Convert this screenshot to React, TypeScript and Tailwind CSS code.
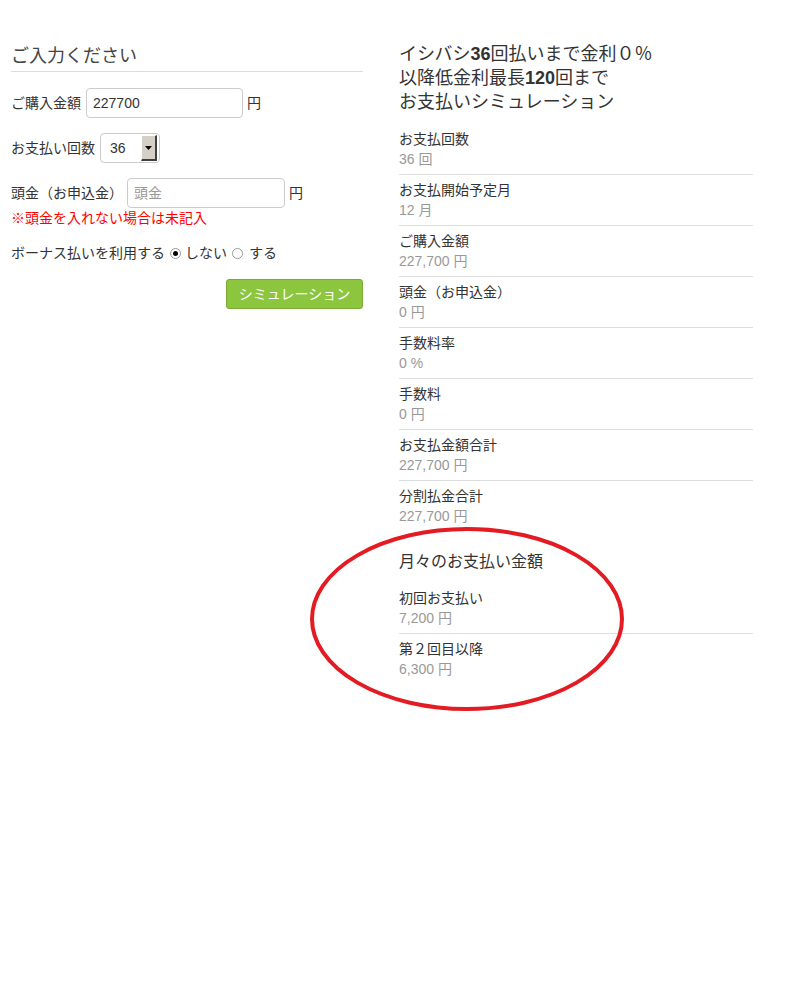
import React from "react";

const rows: [string, string][] = [
  ["お支払回数", "36 回"],
  ["お支払開始予定月", "12 月"],
  ["ご購入金額", "227,700 円"],
  ["頭金（お申込金）", "0 円"],
  ["手数料率", "0 %"],
  ["手数料", "0 円"],
  ["お支払金額合計", "227,700 円"],
  ["分割払金合計", "227,700 円"],
];

const monthly: [string, string][] = [
  ["初回お支払い", "7,200 円"],
  ["第２回目以降", "6,300 円"],
];

function Row({ label, value, last }: { label: string; value: string; last?: boolean }) {
  return (
    <div className={`pt-[5px] pb-[5px] ${last ? "" : "border-b border-[#dddddd]"}`}>
      <div className="text-[14px] leading-[20px] text-[#333333]">{label}</div>
      <div className="text-[14px] leading-[20px] text-[#999999]">{value}</div>
    </div>
  );
}

function Radio({ checked }: { checked?: boolean }) {
  return (
    <span className="inline-flex h-[11px] w-[11px] items-center justify-center rounded-full border border-[#9a9a9a] bg-white">
      {checked && <span className="h-[5px] w-[5px] rounded-full bg-black" />}
    </span>
  );
}

export default function App() {
  return (
    <div
      className="relative min-h-[1008px] w-[800px] bg-white text-[#333333]"
      style={{ fontFamily: '"Liberation Sans", "Noto Sans CJK JP", sans-serif' }}
    >
      <div className="flex gap-[36px] pl-[11px]">
        {/* Left column */}
        <div className="w-[352px] pt-[46px]">
          <h2 className="border-b border-[#dddddd] pb-[5px] text-[18px] font-normal leading-[20px] text-[#444444]">
            ご入力ください
          </h2>
          <div className="mt-[16px] flex items-center text-[14px]">
            <span>ご購入金額</span>
            <div className="ml-[5px] flex h-[30px] w-[157px] items-center rounded-[4px] border border-[#cccccc] px-[6px] text-[14px] text-[#333333]">
              227700
            </div>
            <span className="ml-[4px]">円</span>
          </div>
          <div className="mt-[15px] flex items-center text-[14px]">
            <span>お支払い回数</span>
            <div className="ml-[5px] flex h-[30px] w-[60px] items-center rounded-[4px] border border-[#cccccc] pl-[9px] pr-[2px]">
              <span className="flex-1">36</span>
              <span className="flex h-[26px] w-[16px] items-center justify-center border-r-2 border-b-2 border-t border-l border-r-[#404040] border-b-[#404040] border-t-[#ffffff] border-l-[#ffffff] bg-[#d4d0c8]">
                <svg width="7" height="4" viewBox="0 0 7 4">
                  <path d="M0 0h7L3.5 4z" fill="#000" />
                </svg>
              </span>
            </div>
          </div>
          <div className="mt-[15px] flex items-center text-[14px]">
            <span>頭金（お申込金）</span>
            <div className="ml-[4px] flex h-[30px] w-[158px] items-center rounded-[4px] border border-[#cccccc] px-[6px] text-[#999999]">
              頭金
            </div>
            <span className="ml-[4px]">円</span>
          </div>
          <div className="text-[14px] leading-[20px] text-[#ff0000]">※頭金を入れない場合は未記入</div>
          <div className="mt-[15px] flex items-center text-[14px] leading-[20px]">
            <span>ボーナス払いを利用する</span>
            <span className="ml-[5px] flex items-center">
              <Radio checked />
            </span>
            <span className="ml-[4px]">しない</span>
            <span className="ml-[5px] flex items-center">
              <Radio />
            </span>
            <span className="ml-[6px]">する</span>
          </div>
          <div className="mt-[16px] flex justify-end">
            <button className="h-[30px] w-[137px] rounded-[3px] border border-[#7bab35] bg-[#8cc63f] text-[14px] text-white">
              シミュレーション
            </button>
          </div>
        </div>

        {/* Right column */}
        <div className="w-[354px] pt-[42px]">
          <h2 className="text-[18px] font-normal leading-[24px] text-[#333333]">
            イシバシ<span className="font-bold">36</span>回払いまで金利０％
            <br />
            以降低金利最長<span className="font-bold">120</span>回まで
            <br />
            お支払いシミュレーション
          </h2>
          <div className="mt-[10px]">
            {rows.map(([l, v], i) => (
              <Row key={l} label={l} value={v} last={i === rows.length - 1} />
            ))}
          </div>
          <h3 className="mt-[19px] text-[16px] font-normal leading-[24px] text-[#333333]">月々のお支払い金額</h3>
          <div className="mt-[9px]">
            {monthly.map(([l, v], i) => (
              <Row key={l} label={l} value={v} last={i === monthly.length - 1} />
            ))}
          </div>
        </div>
      </div>

      {/* Red ellipse annotation */}
      <svg
        className="pointer-events-none absolute left-[309px] top-[526px]"
        width="318"
        height="186"
        viewBox="0 0 318 186"
      >
        <ellipse cx="158" cy="93" rx="155" ry="90" fill="none" stroke="#e31b23" strokeWidth="4" />
      </svg>
    </div>
  );
}
